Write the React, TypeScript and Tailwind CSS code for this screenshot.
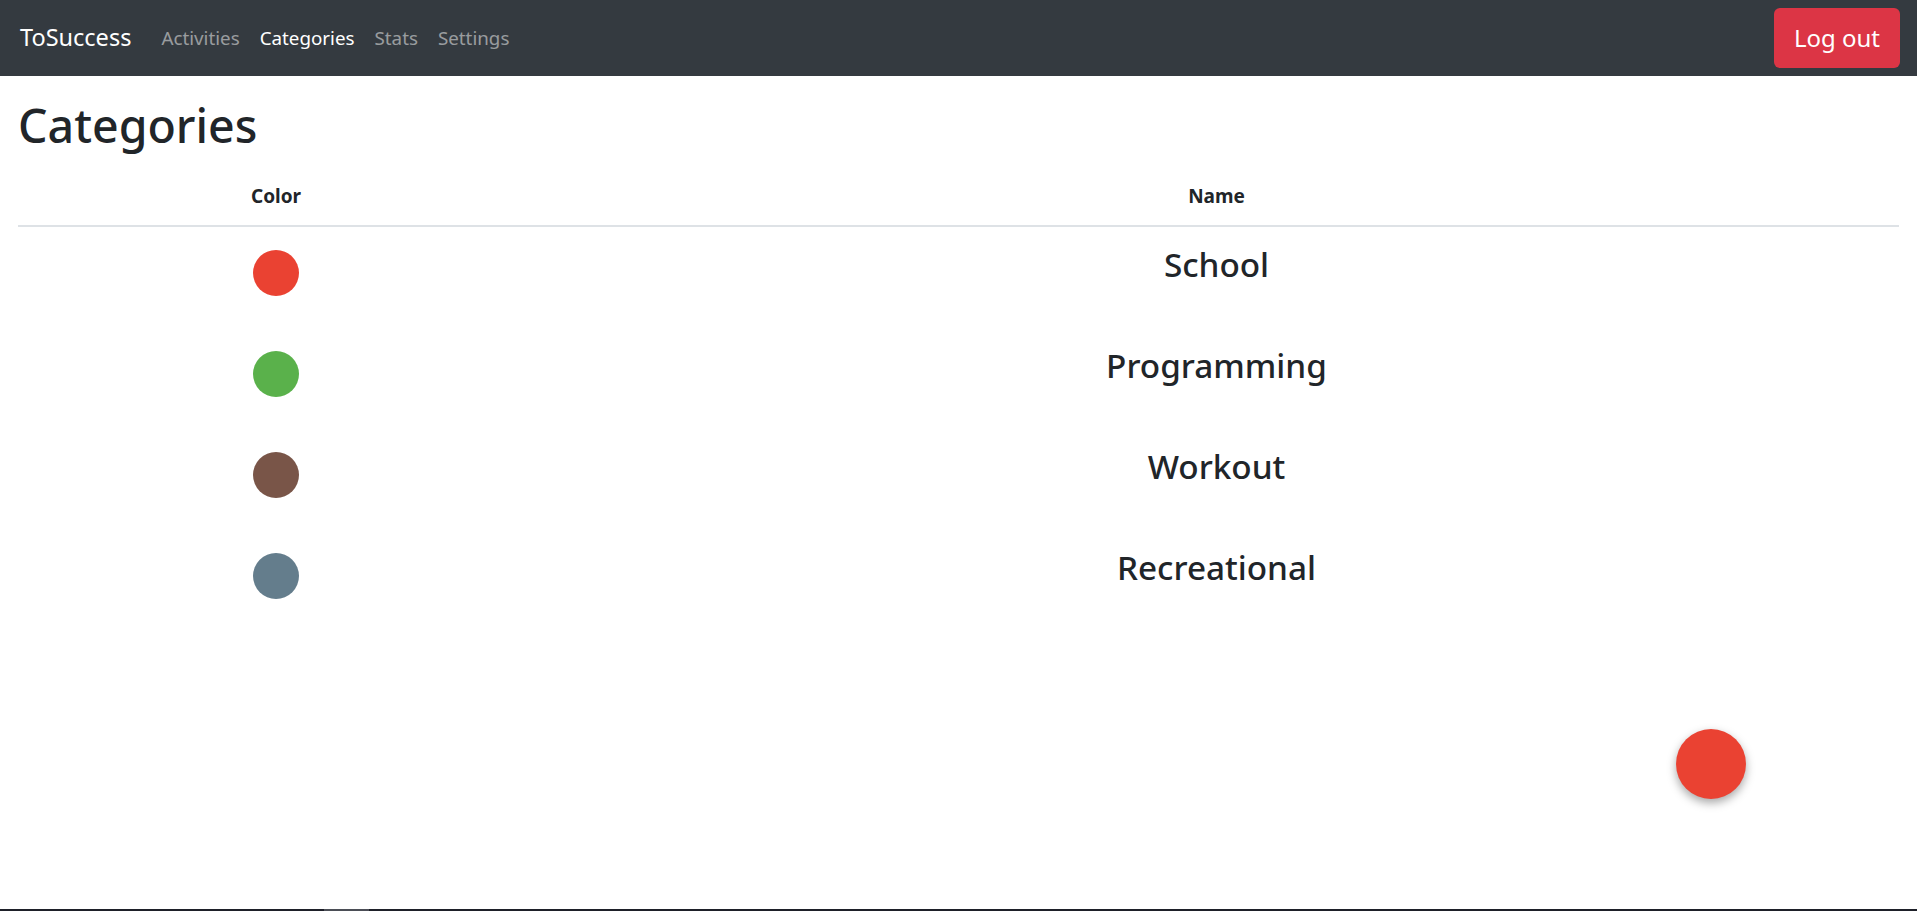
import { FC } from 'react'

interface ICategory {
  name: string
  color: string
}

const categories: ICategory[] = [
  { name: 'School', color: '#ea4232' },
  { name: 'Programming', color: '#5ab14b' },
  { name: 'Workout', color: '#795548' },
  { name: 'Recreational', color: '#647d8c' },
]

const font = { fontFamily: '"Segoe UI", "Noto Sans", "Open Sans", sans-serif' }

const Navbar: FC = () => (
  <nav className="h-[76px] bg-[#343a40] flex items-center pl-[20px] pr-[17px]">
    <a className="text-[23.5px] text-white mr-[20px] leading-none">ToSuccess</a>
    <ul className="flex text-[18.8px]">
      <li className="px-[10px] text-white/50">Activities</li>
      <li className="px-[10px] text-white">Categories</li>
      <li className="px-[10px] text-white/50">Stats</li>
      <li className="px-[10px] text-white/50">Settings</li>
    </ul>
    <button className="ml-auto h-[60px] px-[20px] rounded-[6px] bg-[#dc3545] text-white text-[24px]">
      Log out
    </button>
  </nav>
)

const App: FC = () => (
  <div className="min-h-[911px] bg-white text-[#212529]" style={font}>
    <Navbar />
    <main className="px-[18px]">
      <h1 className="mt-[19px] mb-[10px] text-[46.5px] leading-[60px] font-medium">Categories</h1>
      <div className="grid grid-cols-[516px_1fr]">
        <div className="h-[62px] pt-[2px] flex items-center justify-center text-[19px] font-bold border-b-2 border-[#dee2e6]">
          Color
        </div>
        <div className="h-[62px] pt-[2px] flex items-center justify-center text-[19px] font-bold border-b-2 border-[#dee2e6]">
          Name
        </div>
        {categories.map((item) => (
          <div className="contents" key={item.name}>
            <div className="h-[101px] flex justify-center pt-[23px]">
              <div className="w-[46px] h-[46px] rounded-full" style={{ backgroundColor: item.color }} />
            </div>
            <div className="h-[101px] pt-[16px] text-center text-[33.3px] leading-[42px] font-medium">
              {item.name}
            </div>
          </div>
        ))}
      </div>
    </main>
    <button className="fixed right-[171px] bottom-[112px] w-[70px] h-[70px] rounded-full bg-[#ea4232] shadow-[0_4px_10px_rgba(0,0,0,0.35)]" />
    <div className="fixed bottom-0 left-0 right-0 h-[2px] bg-[#1e2029]">
      <div className="absolute left-[324px] w-[45px] h-[2px] bg-[#4b4e56]" />
    </div>
  </div>
)

export default App
